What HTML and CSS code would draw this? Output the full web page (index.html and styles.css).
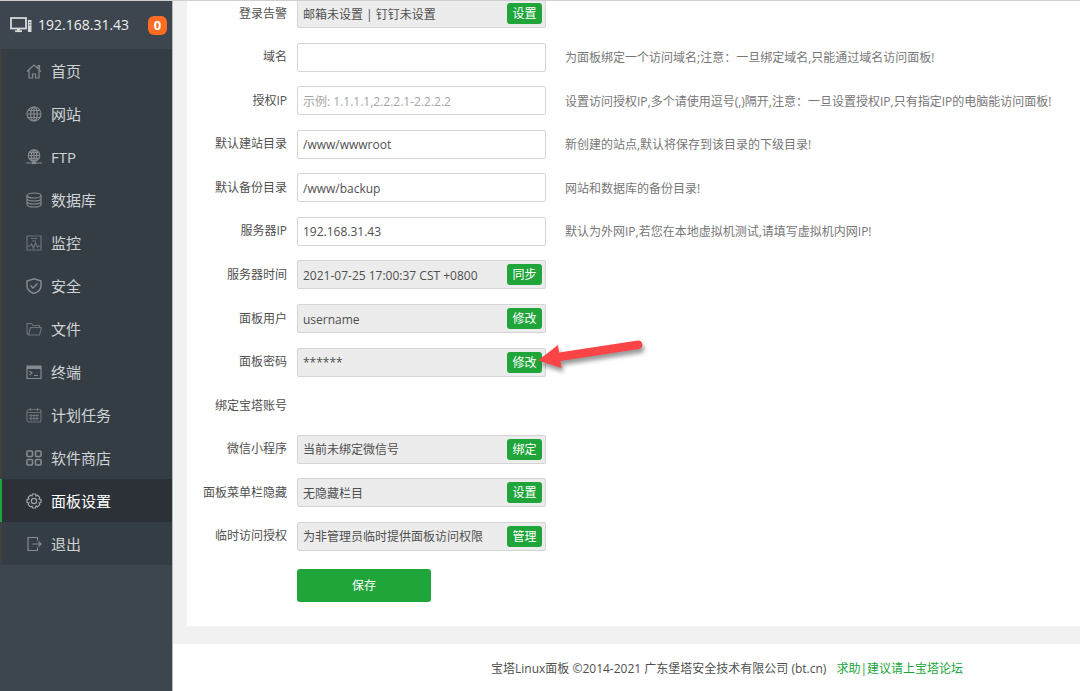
FILE: index.html
```html
<!DOCTYPE html>
<html lang="zh-CN">
<head>
<meta charset="utf-8">
<title>面板设置</title>
<link rel="stylesheet" href="styles.css">
</head>
<body>
<div class="app">
  <aside class="sidebar">
    <div class="server">
      <svg class="server-icon" viewBox="0 0 22 16" fill="none" stroke="currentColor"><rect x="1" y="1" width="15" height="10.5" stroke-width="1.8"/><path d="M5 14.2h7" stroke-width="1.8"/><path d="M8.5 12v2" stroke-width="3"/><path d="M19.7 3v12" stroke-width="3.6"/><path d="M19 5.5h1.5M19 8h1.5" stroke="#59626b" stroke-width="1"/></svg>
      <span class="server-ip">192.168.31.43</span>
      <span class="badge">0</span>
    </div>
    <nav class="menu">
      <a href="#"><svg viewBox="0 0 16 16"><path d="M1 8.500 8 2l7 6.500M3 7.500V15h3.500v-4h3v4H13V7.500M12 5V2.500h1.500v3.500"/></svg>首页</a>
      <a href="#"><svg viewBox="0 0 16 16"><circle cx="8" cy="8" r="7"/><ellipse cx="8" cy="8" rx="3.300" ry="7"/><path d="M8 1v14M1 8h14M2 4.500h12M2 11.500h12"/></svg>网站</a>
      <a href="#"><svg viewBox="0 0 16 16"><circle cx="8" cy="6.500" r="5.700"/><ellipse cx="8" cy="6.500" rx="2.700" ry="5.700"/><path d="M8 1v11M2.500 6.500h11M3.500 3.700h9M3.500 9.300h9M0 14h16"/><path d="M6 14h4" stroke-width="2.200"/></svg>FTP</a>
      <a href="#"><svg viewBox="0 0 16 16"><ellipse cx="8" cy="3.500" rx="7" ry="2.500"/><path d="M1 3.500v9c0 3.300 14 3.300 14 0v-9M1 6.500c0 3.300 14 3.300 14 0M1 9.500c0 3.300 14 3.300 14 0"/></svg>数据库</a>
      <a href="#"><svg class="dim" viewBox="0 0 16 16"><path d="M1 1h14v14H1zM5 3.500h6M6 6h4M1 11h3l1.500-2 2 4 2-5 2 4 1-1H15"/></svg>监控</a>
      <a href="#"><svg viewBox="0 0 16 16"><path d="M8 .8 15 3v5c0 3.500-3 6-7 7.500C4 14 1 11.500 1 8V3zM4.500 7.500 7 10l4.500-4.500" stroke-width="1.500"/></svg>安全</a>
      <a href="#"><svg class="dim" viewBox="0 0 16 16"><path d="M2.500 14 1 12.500V2.500h4.500L7 4.500h6.500v2M2.500 14 4.500 6.500h11L13.500 14z"/></svg>文件</a>
      <a href="#"><svg viewBox="0 0 16 16"><path d="M1 2h14v12.500H1zM3.500 7l2.500 2-2.500 2M8 11.500h4"/><path d="M1 3.500h14" stroke-width="3"/></svg>终端</a>
      <a href="#"><svg class="dim" viewBox="0 0 16 16"><rect x="1" y="2.500" width="14" height="12.500" rx="2"/><path d="M1 5.500h14M4.500 1v3M11.500 1v3M3 8.500h10M3 11.500h10M5 7v7M8 7v7M11 7v7"/></svg>计划任务</a>
      <a href="#"><svg viewBox="0 0 16 16"><g stroke-width="1.600"><rect x="1" y="1" width="5.500" height="5.500" rx="1"/><rect x="9.500" y="1" width="5.500" height="5.500" rx="1"/><rect x="1" y="9.500" width="5.500" height="5.500" rx="1"/><rect x="9.500" y="9.500" width="5.500" height="5.500" rx="1"/></g></svg>软件商店</a>
      <a href="#" class="active"><svg viewBox="0 0 16 16"><path d="M6.500 1h3l.5 2 1.500-.8 2.200 2.200L13 6l2 .5v3l-2 .5.7 1.600-2.200 2.200L10 13l-.5 2h-3L6 13l-1.600.8-2.200-2.200L3 10l-2-.5v-3L3 6l-.8-1.600 2.200-2.200L6 3z"/><circle cx="8" cy="8" r="2.600"/></svg>面板设置</a>
      <a href="#"><svg viewBox="0 0 16 16"><path d="M11.500 4.500V1.500H2v13h9.500v-3M6.500 8H15M12.500 5.500 15 8l-2.500 2.500"/></svg>退出</a>
    </nav>
  </aside>
  <div class="page">
    <main class="panel">
      <form class="settings">
        <div class="row"><label for="alert">登录告警</label><div class="field locked"><input id="alert" value="邮箱未设置 | 钉钉未设置" readonly><button type="button">设置</button></div></div>
        <div class="row"><label for="domain">域名</label><div class="field"><input id="domain"></div><p>为面板绑定一个访问域名;注意：一旦绑定域名,只能通过域名访问面板!</p></div>
        <div class="row"><label for="limitip">授权IP</label><div class="field"><input id="limitip" placeholder="示例: 1.1.1.1,2.2.2.1-2.2.2.2"></div><p>设置访问授权IP,多个请使用逗号(,)隔开,注意：一旦设置授权IP,只有指定IP的电脑能访问面板!</p></div>
        <div class="row"><label for="sites">默认建站目录</label><div class="field"><input id="sites" value="/www/wwwroot"></div><p>新创建的站点,默认将保存到该目录的下级目录!</p></div>
        <div class="row"><label for="backup">默认备份目录</label><div class="field"><input id="backup" value="/www/backup"></div><p>网站和数据库的备份目录!</p></div>
        <div class="row"><label for="address">服务器IP</label><div class="field"><input id="address" value="192.168.31.43"></div><p>默认为外网IP,若您在本地虚拟机测试,请填写虚拟机内网IP!</p></div>
        <div class="row"><label for="time">服务器时间</label><div class="field locked"><input id="time" value="2021-07-25 17:00:37 CST +0800" readonly><button type="button">同步</button></div></div>
        <div class="row"><label for="user">面板用户</label><div class="field locked"><input id="user" value="username" readonly><button type="button">修改</button></div></div>
        <div class="row"><label for="password">面板密码</label><div class="field locked"><input id="password" value="******" readonly><button type="button">修改</button>
          <svg class="arrow" viewBox="0 0 112 40"><path d="M104 5.500 25 17.500 24 10 4 25.500 27.500 33 26.500 26 105 14a4.300 4.300 0 0 0-1-8.500z" fill="#fb4445"/></svg></div></div>
        <div class="row"><span class="label">绑定宝塔账号</span></div>
        <div class="row"><label for="wechat">微信小程序</label><div class="field locked"><input id="wechat" value="当前未绑定微信号" readonly><button type="button">绑定</button></div></div>
        <div class="row"><label for="hidden">面板菜单栏隐藏</label><div class="field locked"><input id="hidden" value="无隐藏栏目" readonly><button type="button">设置</button></div></div>
        <div class="row"><label for="temp">临时访问授权</label><div class="field locked"><input id="temp" value="为非管理员临时提供面板访问权限" readonly><button type="button">管理</button></div></div>
      </form>
      <button type="button" class="save">保存</button>
    </main>
    <footer class="footer"><span>宝塔Linux面板 ©2014-2021 广东堡塔安全技术有限公司 (bt.cn)</span><a href="#">求助|建议请上宝塔论坛</a></footer>
  </div>
</div>
</body>
</html>
```
FILE: styles.css
```css
* { box-sizing: border-box; }
body {
  margin: 0;
  background: #f1f1f1;
  color: #4f4f4f;
  font: 12px/18px "Open Sans", "Noto Sans CJK SC", sans-serif;
}
input, button { font: inherit; color: inherit; }
a { text-decoration: none; }
.app {
  display: flex;
  min-height: 100vh;
  border-top: 1px solid #cfcfcf;
  overflow: hidden;
}
.sidebar {
  flex: 0 0 173px;
  background: #3d454e;
  border-right: 1px solid #b5b8bc;
}
.server {
  display: flex;
  align-items: center;
  height: 48px;
  padding: 0 5px 0 10px;
  color: #f0f0f0;
  font-size: 14px;
}
.server-icon { width: 22px; height: 16px; margin-right: 6px; color: #d5d7d9; }
.badge {
  margin-left: auto;
  width: 19px;
  border-radius: 6px;
  background: #ff6c24;
  color: #fff;
  font-size: 13px;
  font-weight: 700;
  line-height: 19px;
  text-align: center;
}
.menu { background: #353d44; }
.menu a {
  display: flex;
  align-items: center;
  gap: 9px;
  height: 43px;
  padding-left: 24px;
  border-left: 2px solid #413f3f;
  color: #d0d3d5;
  font-size: 15px;
}
.menu svg {
  width: 16px;
  height: 16px;
  fill: none;
  stroke: #868a8e;
  stroke-width: 1.2;
}
.menu .dim { stroke: #6c7176; }
.menu .active { background: #2c3138; border-left-color: #20a53a; color: #fff; }
.menu .active svg { stroke: #a4a7aa; }
.page { flex: 1; min-width: 0; display: flex; flex-direction: column; }
.panel {
  margin: 0 0 18px 14px;
  padding-bottom: 24px;
  background: #fff;
}
.settings {
  display: flex;
  flex-direction: column;
  justify-content: space-between;
  min-height: 552px;
  margin-top: -2px;
}
.row { display: flex; align-items: center; min-height: 29px; white-space: nowrap; }
.row label, .row .label { width: 100px; margin-right: 10px; text-align: right; }
.row p { margin: 0 0 0 19px; padding-top: 2px; color: #777; }
.field {
  position: relative;
  display: flex;
  align-items: center;
  width: 249px;
  height: 29px;
  padding-right: 3px;
  border: 1px solid #d4d4d4;
  border-radius: 2px;
  background: #fff;
}
.field input {
  flex: 1;
  min-width: 0;
  padding: 2px 5px 0;
  border: 0;
  outline: 0;
  background: transparent;
}
.field input::placeholder { color: #a5a5a5; }
.locked { background: #ececec; }
.field button {
  width: 35px;
  height: 21px;
  padding: 0;
  border: 0;
  border-radius: 3px;
  background: #20a53a;
  color: #fff;
  line-height: 21px;
}
.arrow {
  position: absolute;
  left: 236px;
  top: -14px;
  width: 112px;
  height: 40px;
  filter: drop-shadow(2px 4px 2px #0006);
}
.save {
  display: block;
  width: 134px;
  height: 33px;
  margin: 18px 0 0 110px;
  border: 0;
  border-radius: 3px;
  background: #20a53a;
  color: #fff;
}
.footer {
  flex: 1;
  display: flex;
  justify-content: center;
  align-items: center;
  gap: 10px;
  padding: 2px 0 0 201px;
  background: #fff;
  white-space: nowrap;
}
.footer a { color: #20a53a; }
```
